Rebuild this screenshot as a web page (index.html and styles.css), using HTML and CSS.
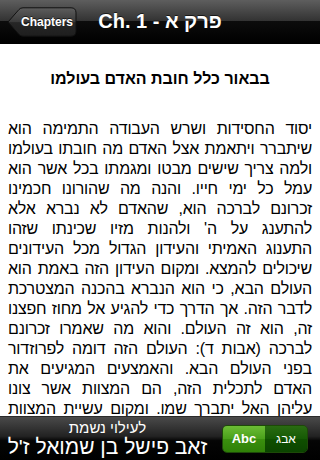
FILE: index.html
```html
<!DOCTYPE html>
<html lang="he">
<head>
<meta charset="utf-8">
<link rel="stylesheet" href="styles.css">
</head>
<body>
<div class="app">
  <header class="navbar">
    <button class="back">
      <svg class="back-shape" width="70" height="30" viewBox="0 0 70 30">
        <defs>
          <linearGradient id="bg" x1="0" y1="0" x2="0" y2="1">
            <stop offset="0" stop-color="#5d5d5d"/>
            <stop offset="0.5" stop-color="#3a3a3a"/>
            <stop offset="0.52" stop-color="#262626"/>
            <stop offset="1" stop-color="#1e1e1e"/>
          </linearGradient>
        </defs>
        <path d="M1 15 L12 2.5 Q13.5 0.8 16 0.8 L64 0.8 Q69 0.8 69 5.8 L69 24.2 Q69 29.2 64 29.2 L16 29.2 Q13.5 29.2 12 27.5 Z" fill="url(#bg)" stroke="#111" stroke-width="1"/>
      </svg>
      <span class="back-label">Chapters</span>
    </button>
    <h1 class="title">Ch. 1 - פרק א</h1>
  </header>
  <main class="content" dir="rtl">
    <h2 class="heading">בבאור כלל חובת האדם בעולמו</h2>
    <p class="text">יסוד החסידות ושרש העבודה התמימה הוא<br>שיתברר ויתאמת אצל האדם מה חובתו בעולמו<br>ולמה צריך שישים מבטו ומגמתו בכל אשר הוא<br>עמל כל ימי חייו. והנה מה שהורונו חכמינו<br>זכרונם לברכה הוא, שהאדם לא נברא אלא<br>להתענג על ה' ולהנות מזיו שכינתו שזהו<br>התענוג האמיתי והעידון הגדול מכל העידונים<br>שיכולים להמצא. ומקום העידון הזה באמת הוא<br>העולם הבא, כי הוא הנברא בהכנה המצטרכת<br>לדבר הזה. אך הדרך כדי להגיע אל מחוז חפצנו<br>זה, הוא זה העולם. והוא מה שאמרו זכרונם<br>לברכה (אבות ד): העולם הזה דומה לפרוזדור<br>בפני העולם הבא. והאמצעים המגיעים את<br>האדם לתכלית הזה, הם המצוות אשר צונו<br>עליהן האל יתברך שמו. ומקום עשיית המצוות<br>הוא רק בעולם הזה. על כן הושם האדם בזה</p>
  </main>
  <footer class="toolbar">
    <div class="dedication" dir="rtl">
      <div class="ded-small">לעילוי נשמת</div>
      <div class="ded-name">זאב פישל בן שמואל ז'ל</div>
    </div>
    <div class="segmented">
      <span class="seg seg-on">Abc</span>
      <span class="seg seg-off">אבג</span>
    </div>
  </footer>
</div>
</body>
</html>
```
FILE: styles.css
```css
html, body {
  margin: 0;
  padding: 0;
}
body {
  width: 320px;
  height: 460px;
  overflow: hidden;
  background: #fff;
  font-family: "Liberation Sans", Arial, sans-serif;
}
.app {
  display: flex;
  flex-direction: column;
  height: 460px;
}
.navbar {
  height: 44px;
  flex: none;
  display: flex;
  align-items: center;
  position: relative;
  background: linear-gradient(#5e5e5e 0%, #333 48%, #0c0c0c 50%, #000 100%);
  border-bottom: 1px solid #000;
  box-sizing: border-box;
}
.back {
  position: relative;
  margin-left: 7px;
  width: 70px;
  height: 30px;
  padding: 0 0 0 10px;
  border: 0;
  background: none;
  display: flex;
  align-items: center;
  justify-content: center;
  font-family: "Liberation Sans", Arial, sans-serif;
}
.back-shape {
  position: absolute;
  left: 0;
  top: 0;
}
.back-label {
  position: relative;
  color: #fff;
  font-size: 12px;
  font-weight: bold;
  text-shadow: 0 -1px 0 rgba(0,0,0,0.6);
}
.title {
  position: absolute;
  left: 0;
  right: 0;
  top: 0;
  height: 43px;
  margin: 0;
  display: flex;
  align-items: center;
  justify-content: center;
  color: #fff;
  font-size: 20px;
  font-weight: bold;
  text-shadow: 0 -1px 0 rgba(0,0,0,0.6);
  pointer-events: none;
}
.content {
  flex: 1;
  overflow: hidden;
  padding: 25px 8px 0;
  color: #000;
}
.heading {
  margin: 0 0 30px;
  text-align: center;
  font-size: 16px;
  font-weight: bold;
  line-height: 20px;
}
.text {
  margin: 0;
  font-size: 16px;
  letter-spacing: -0.2px;
  line-height: 20px;
  text-align: justify;
  text-align-last: justify;
}
.toolbar {
  height: 44px;
  flex: none;
  display: flex;
  align-items: center;
  background: linear-gradient(#4a4a4a 0%, #222 45%, #050505 55%, #000 100%);
  border-top: 1px solid #2a2a2a;
  box-sizing: border-box;
  overflow: hidden;
}
.dedication {
  width: 215px;
  flex: none;
  color: #fff;
  text-align: center;
  white-space: nowrap;
}
.ded-small {
  font-size: 15px;
  line-height: 17px;
}
.ded-name {
  font-size: 21px;
  line-height: 22px;
}
.segmented {
  margin-left: 7px;
  display: flex;
  height: 28px;
  width: 86px;
  border: 1px solid #1d4a08;
  border-radius: 5px;
  overflow: hidden;
  box-sizing: border-box;
}
.seg {
  flex: 1;
  display: flex;
  align-items: center;
  justify-content: center;
  color: #fff;
}
.seg-on {
  background: linear-gradient(#6cbd35 0%, #49a01a 50%, #3a8f0e 52%, #2f8008 100%);
  font-weight: bold;
  font-size: 13px;
}
.seg-off {
  background: linear-gradient(#2a6b12 0%, #155a04 50%, #0f4f00 52%, #0b4400 100%);
  font-size: 12px;
}
```
